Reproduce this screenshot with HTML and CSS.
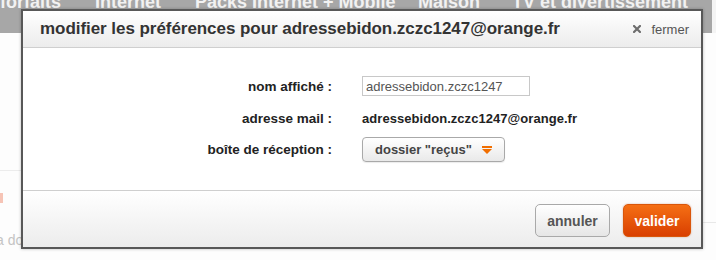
FILE: index.html
```html
<!DOCTYPE html>
<html lang="fr">
<head>
<meta charset="utf-8">
<link rel="stylesheet" href="styles.css">
</head>
<body>
<div class="page">
  <nav class="nav">
    <span class="nav-item n1">forfaits</span>
    <span class="nav-item n2">Internet</span>
    <span class="nav-item n3">Packs Internet + Mobile</span>
    <span class="nav-item n4">Maison</span>
    <span class="nav-item n5">TV et divertissement</span>
    <span class="nav-end"></span>
  </nav>
  <div class="behind">
    <div class="line-left"></div>
    <div class="mark"></div>
    <div class="faded">a do</div>
    <div class="line-right"></div>
  </div>

  <div class="dialog">
    <header class="dlg-head">
      <h1 class="dlg-title">modifier les préférences pour adressebidon.zczc1247@orange.fr</h1>
      <a class="close"><svg class="close-x" width="8" height="8" viewBox="0 0 8 8"><path d="M1 1 L7 7 M7 1 L1 7" stroke="#6e6e6e" stroke-width="2.2" stroke-linecap="square"/></svg>fermer</a>
    </header>
    <div class="dlg-body">
      <div class="row r1">
        <label class="lbl">nom affiché :</label>
        <div class="val"><input class="field" type="text" value="adressebidon.zczc1247"></div>
      </div>
      <div class="row r2">
        <span class="lbl">adresse mail :</span>
        <span class="val mail">adressebidon.zczc1247@orange.fr</span>
      </div>
      <div class="row r3">
        <span class="lbl">boîte de réception :</span>
        <div class="val">
          <button class="select">dossier "reçus"
            <svg class="caret" width="10" height="8" viewBox="0 0 10 8"><rect x="0" y="0" width="10" height="2" fill="#f16e00"/><polygon points="0,3 10,3 5,8" fill="#f16e00"/></svg>
          </button>
        </div>
      </div>
    </div>
    <footer class="dlg-foot">
      <button class="btn cancel">annuler</button>
      <button class="btn ok">valider</button>
    </footer>
  </div>
</div>
</body>
</html>
```
FILE: styles.css
```css
* { box-sizing: border-box; }
html, body { margin: 0; padding: 0; }
body { font-family: "Liberation Sans", Arial, sans-serif; background: #fdfdfd; }
.page { position: relative; width: 716px; height: 260px; overflow: hidden; }

.nav { height: 33px; background: #a7a7a7; position: relative; }
.nav-item { position: absolute; top: -8px; color: #f2f2f2; font-weight: bold; font-size: 18px; line-height: 20px; white-space: nowrap; }
.n1 { left: 0; }
.n2 { left: 95px; }
.n3 { left: 195px; }
.n4 { left: 418px; }
.n5 { left: 512px; }
.nav-end { position: absolute; right: 0; top: 0; width: 4px; height: 33px; background: #f4f4f4; }

.behind { position: relative; height: 227px; }
.line-left { position: absolute; left: 0; top: 137px; width: 30px; height: 1px; background: #ececec; }
.mark { position: absolute; left: 0; top: 160px; width: 3px; height: 10px; background: #f6c4b6; }
.faded { position: absolute; left: -4px; top: 199px; font-size: 14px; color: #c4c4c4; }
.line-right { position: absolute; right: 0; top: 189px; width: 14px; height: 1px; background: #e8e8e8; }

.dialog {
  position: absolute; left: 21px; top: 9px; width: 682px; height: 240px;
  border: 2px solid #585858; background: #fff;
  display: flex; flex-direction: column;
  box-shadow: 0 0 3px rgba(0,0,0,0.25);
}
.dlg-head {
  height: 37px; flex: none;
  background: linear-gradient(#ffffff, #ececec);
  border-bottom: 1px solid #cfcfcf;
  display: flex; align-items: center; justify-content: space-between;
  padding: 0 12px 0 17px;
}
.dlg-title { margin: 0; font-size: 17px; font-weight: bold; color: #333; letter-spacing: -0.05px; }
.close { display: flex; align-items: center; font-size: 13px; color: #555; text-decoration: none; }
.close-x { display: block; margin-right: 10px; }

.dlg-body { flex: 1; padding-top: 28px; }
.row { display: grid; grid-template-columns: 309px auto; column-gap: 30px; align-items: center; }
.lbl { text-align: right; font-size: 13.5px; font-weight: bold; color: #222; }
.r1 { height: 20px; }
.r2 { height: 20px; margin-top: 12px; }
.r3 { height: 25px; margin-top: 9px; }
.field {
  display: block; width: 168px; height: 20px; margin: 0;
  border: 1px solid #c8c8c8; padding: 0 3px;
  font-family: "Liberation Sans", Arial, sans-serif; font-size: 13px; color: #555;
  background: #fff;
}
.mail { font-size: 13px; font-weight: bold; color: #222; letter-spacing: 0.05px; }
.select {
  display: flex; align-items: center; justify-content: space-between;
  width: 143px; height: 25px; margin: 0; padding: 0 12px 0 12px;
  border: 1px solid #a9a9a9; border-radius: 4px;
  background: linear-gradient(#ffffff, #e9e9e9);
  font-family: "Liberation Sans", Arial, sans-serif; font-size: 13px; font-weight: bold; color: #444;
  box-shadow: 0 1px 1px rgba(0,0,0,0.08);
}
.caret { display: block; }

.dlg-foot {
  height: 57px; flex: none;
  border-top: 1px solid #cfcfcf;
  background: linear-gradient(#ffffff, #ececec);
  display: flex; justify-content: flex-end; align-items: flex-end;
  padding: 0 10px 10px 0; gap: 13px;
}
.btn {
  height: 33px; margin: 0; border-radius: 5px;
  font-family: "Liberation Sans", Arial, sans-serif; font-size: 14px; font-weight: bold;
  padding: 0;
}
.cancel {
  width: 75px; border: 1px solid #a9a9a9; color: #555;
  background: linear-gradient(#ffffff, #e6e6e6);
}
.ok {
  width: 68px; border: 1px solid #d9560a; color: #fff;
  background: linear-gradient(#f56f14, #d93f00);
  box-shadow: 0 0 2px rgba(180,60,0,0.4);
}
```
